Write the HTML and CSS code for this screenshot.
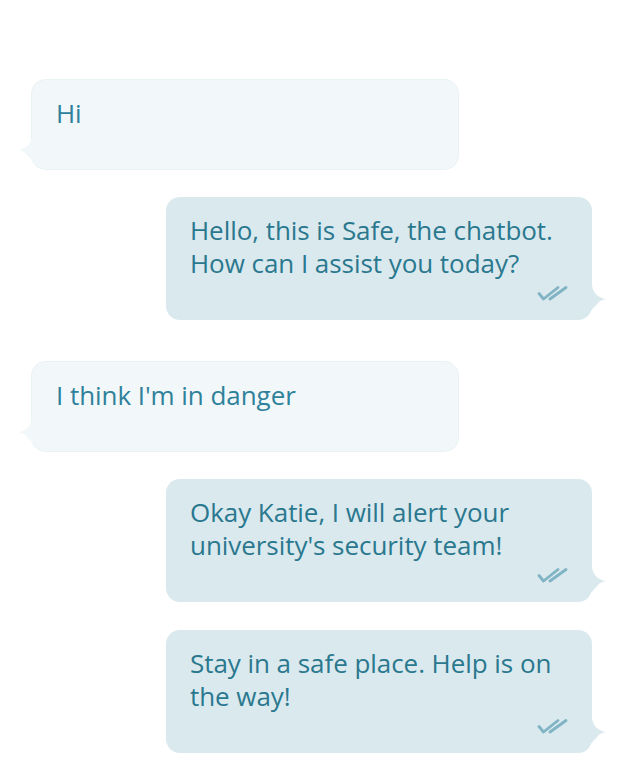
FILE: index.html
```html
<!DOCTYPE html>
<html lang="en">
<head>
<meta charset="utf-8">
<title>Safe chatbot</title>
<link rel="stylesheet" href="styles.css">
</head>
<body>
<main class="chat">
  <div class="msg msg-in">
    <p class="text">Hi</p>
    <svg class="tail" width="18" height="26" viewBox="0 0 18 26"><path d="M0 0H2C2 8 8 14 16 15C12 16 9 17 8 19C7 21 3 23 2 26H0Z"/></svg>
  </div>

  <div class="msg msg-out">
    <p class="text">Hello, this is Safe, the chatbot. How can I assist you today?</p>
    <div class="meta"><svg class="ticks" width="32" height="15" viewBox="0 0 32 15"><path d="M2 7.5L6.5 13L21 1.5M13 13L29 1.5"/></svg></div>
    <svg class="tail" width="18" height="26" viewBox="0 0 18 26"><path d="M0 0H2C2 8 8 14 16 15C12 16 9 17 8 19C7 21 3 23 2 26H0Z"/></svg>
  </div>

  <div class="msg msg-in turn">
    <p class="text">I think I'm in danger</p>
    <svg class="tail" width="18" height="26" viewBox="0 0 18 26"><path d="M0 0H2C2 8 8 14 16 15C12 16 9 17 8 19C7 21 3 23 2 26H0Z"/></svg>
  </div>

  <div class="msg msg-out">
    <p class="text">Okay Katie, I will alert your university's security team!</p>
    <div class="meta"><svg class="ticks" width="32" height="15" viewBox="0 0 32 15"><path d="M2 7.5L6.5 13L21 1.5M13 13L29 1.5"/></svg></div>
    <svg class="tail" width="18" height="26" viewBox="0 0 18 26"><path d="M0 0H2C2 8 8 14 16 15C12 16 9 17 8 19C7 21 3 23 2 26H0Z"/></svg>
  </div>

  <div class="msg msg-out">
    <p class="text">Stay in a safe place. Help is on the way!</p>
    <div class="meta"><svg class="ticks" width="32" height="15" viewBox="0 0 32 15"><path d="M2 7.5L6.5 13L21 1.5M13 13L29 1.5"/></svg></div>
    <svg class="tail" width="18" height="26" viewBox="0 0 18 26"><path d="M0 0H2C2 8 8 14 16 15C12 16 9 17 8 19C7 21 3 23 2 26H0Z"/></svg>
  </div>
</main>
</body>
</html>
```
FILE: styles.css
```css
html, body {
  margin: 0;
  padding: 0;
  background: #ffffff;
}

body {
  font-family: "Open Sans", "Noto Sans", sans-serif;
  width: 625px;
  height: 763px;
  overflow: hidden;
}

.chat {
  display: flex;
  flex-direction: column;
  gap: 28px;
  padding: 80px 0 0 32px;
  width: 560px;
}

.msg {
  position: relative;
  width: 426px;
  box-sizing: border-box;
  border-radius: 14px;
}

.text {
  margin: 0;
  font-size: 26px;
  line-height: 33px;
  font-weight: 400;
  letter-spacing: -0.05px;
}

.msg-in {
  align-self: flex-start;
  background: #f2f8f9;
  box-shadow: 0 0 0 1px #eaf2f4;
  padding: 17px 24px 39px;
  color: #2f819b;
}

.msg-in .tail {
  position: absolute;
  left: -16px;
  bottom: 8px;
  transform: scaleX(-1);
  fill: #f2f8f9;
}

.msg-out {
  align-self: flex-start;
  margin-left: 134px;
  background: #dae9ee;
  padding: 17px 23px 19px 24px;
  color: #2a788e;
}

.msg-out .tail {
  position: absolute;
  right: -16px;
  bottom: 10px;
  fill: #dae9ee;
}

.turn {
  margin-top: 14px;
}

.meta {
  display: flex;
  justify-content: flex-end;
  height: 15px;
  margin-top: 6px;
}

.ticks {
  display: block;
  fill: none;
  stroke: #80b3c4;
  stroke-width: 2.8;
  stroke-linecap: round;
  stroke-linejoin: round;
}
```
